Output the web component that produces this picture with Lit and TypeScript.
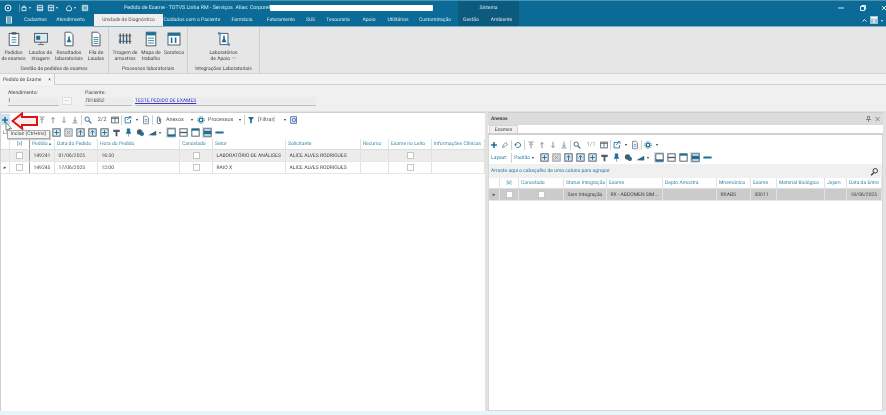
import { LitElement, html, css, svg } from "lit";
import { customElement } from "lit/decorators.js";
import { styleMap } from "lit/directives/style-map.js";

const B = "#1c6f96", D = "#4a5a66", G = "#737e86";
const ic: Record<string, any> = {
  plus: svg`<path d="M6 2.500v7M2.500 6h7" stroke="${B}" stroke-width="1.800"/>`,
  pen: svg`<path d="M3 9l1-3 3-3 2 2-3 3z" fill="none" stroke="${G}"/>`,
  sync: svg`<path d="M3 6a3 3 0 1 1 1 2.300" fill="none" stroke="${B}" stroke-width="1.200"/><path d="M1.500 5h3L3 7.500z" fill="${B}"/>`,
  top: svg`<path d="M3 2.500h6M6 10V4M4 6l2-2 2 2" fill="none" stroke="${G}"/>`,
  up: svg`<path d="M6 10V3M4 5l2-2 2 2" fill="none" stroke="${G}"/>`,
  down: svg`<path d="M6 2v7M4 7l2 2 2-2" fill="none" stroke="${G}"/>`,
  bottom: svg`<path d="M3 9.500h6M6 2v6M4 6l2 2 2-2" fill="none" stroke="${G}"/>`,
  search: svg`<circle cx="5" cy="5" r="2.600" fill="none" stroke="${B}" stroke-width="1.100"/><path d="M7 7l3 3" stroke="${D}" stroke-width="1.400"/>`,
  cols: svg`<rect x="2" y="2.500" width="8" height="7" fill="#fff" stroke="${D}"/><path d="M2 4h8M6 3v6" stroke="${D}"/>`,
  export: svg`<path d="M7 3H2.500v6.500H9V6" fill="none" stroke="${B}"/><path d="M5 6l4-4M7 2h2.500v2.500" fill="none" stroke="${B}"/>`,
  doc: svg`<path d="M3 1.500h4l2 2v7H3z" fill="#f4f7f9" stroke="${G}"/><path d="M4.500 5.500h3M4.500 7.500h3" stroke="${B}" stroke-width=".7"/>`,
  clip: svg`<path d="M8 4v4.500a2 2 0 0 1-4 0V3.500a1.300 1.300 0 0 1 2.600 0V8" fill="none" stroke="${D}"/>`,
  gear: svg`<circle cx="6" cy="6" r="2.200" fill="none" stroke="${B}" stroke-width="1.600"/><circle cx="6" cy="6" r="4" fill="none" stroke="${B}" stroke-width="1" stroke-dasharray="1.200 1"/>`,
  filter: svg`<path d="M2.500 2.500h7L7 6v4H5V6z" fill="${B}"/>`,
  report: svg`<rect x="2" y="2" width="7" height="8" fill="#dbe9f5" stroke="#4b6fb3"/><circle cx="6" cy="6" r="2" fill="none" stroke="#4b6fb3"/>`,
  box: svg`<rect x="2" y="2" width="8" height="8" fill="#dfeaf0" stroke="${D}"/><path d="M6 3.500v5M3.500 6h5" stroke="${B}"/>`,
  boxg: svg`<rect x="2" y="2" width="8" height="8" fill="#ddd" stroke="#8a949b"/><path d="M4 4l4 4M8 4l-4 4" stroke="#8a949b"/>`,
  boxu: svg`<rect x="2" y="2" width="8" height="8" fill="#dfeaf0" stroke="${D}"/><path d="M6 9V4M4 6l2-2 2 2" fill="none" stroke="${B}"/>`,
  pin: svg`<path d="M2.500 3h7v2.500H7V10H5V5.500H2.500z" fill="${D}"/>`,
  bott: svg`<path d="M4.500 2h3v3l1 2H3.500l1-2zM6 7v3.500" fill="${B}" stroke="${B}" stroke-width=".6"/>`,
  color: svg`<circle cx="5" cy="5.500" r="3" fill="${D}"/><circle cx="7.500" cy="7.500" r="2.300" fill="${B}"/>`,
  bars: svg`<path d="M1.500 9L10 4v5z" fill="${D}"/><path d="M5 9V7h5v2z" fill="${B}"/>`,
  l1: svg`<rect x="2" y="2" width="8" height="8" fill="#fff" stroke="${D}"/><path d="M2 9h8" stroke="${B}" stroke-width="2"/>`,
  l2: svg`<rect x="2" y="2" width="8" height="8" fill="#fff" stroke="${D}"/><path d="M2 6h8" stroke="${D}" stroke-width="1.500"/>`,
  l3: svg`<rect x="2" y="2" width="8" height="8" fill="#fff" stroke="${D}"/><path d="M2 3h8" stroke="${B}" stroke-width="2"/>`,
  l4: svg`<rect x="2" y="2" width="8" height="8" fill="#fff" stroke="${D}"/><path d="M2 6h8" stroke="${B}" stroke-width="4"/>`,
  dash: svg`<path d="M1.500 6h9" stroke="${B}" stroke-width="2.200"/>`,
};
const icon = (n: string, on = false) =>
  html`<span class="ti ${on ? "on" : ""}"><svg viewBox="0 0 12 12">${ic[n]}</svg></span>`;
const caret = html`<span class="caret"></span>`;
const sep = html`<span class="sep"></span>`;

const rib: Record<string, any> = {
  clip: svg`<rect x="4" y="3" width="12" height="15" fill="#fff" stroke="${D}" stroke-width="1.200"/><rect x="7" y="1.500" width="6" height="3" fill="${D}"/><path d="M7 8h6M7 11h6M7 14h6" stroke="${B}"/>`,
  screen: svg`<rect x="2" y="3" width="16" height="11" fill="#dfeaf0" stroke="${D}" stroke-width="1.200"/><path d="M6 17h8M10 14v3" stroke="${D}"/><rect x="4" y="6" width="5" height="5" fill="${B}"/>`,
  flask: svg`<path d="M5 1.500h7l3 3v14H5z" fill="#fff" stroke="${D}" stroke-width="1.200"/><path d="M9 7h2v3l2 4H7l2-4z" fill="${B}"/>`,
  file: svg`<path d="M5 1.500h7l3 3v14H5z" fill="#fff" stroke="${D}" stroke-width="1.200"/><path d="M7 8h6M7 10.500h6M7 13h6M7 15.500h6" stroke="${B}"/>`,
  tubes: svg`<path d="M2 6h16M2 13h16" stroke="${D}"/><path d="M4 3v13M8 3v13M12 3v13M16 3v13" stroke="${D}" stroke-width="1.600"/><path d="M4 10v5M12 10v5" stroke="${B}" stroke-width="1.600"/>`,
  map: svg`<rect x="4" y="1.500" width="12" height="17" fill="#fff" stroke="${D}" stroke-width="1.200"/><rect x="4" y="1.500" width="12" height="4" fill="${B}"/><path d="M6 9h8M6 12h8M6 15h8" stroke="${B}"/>`,
  soro: svg`<rect x="2.500" y="2.500" width="15" height="15" fill="#fff" stroke="${D}" stroke-width="1.200"/><rect x="2.500" y="2.500" width="15" height="3.500" fill="${B}"/><path d="M7 8v7M12 8v7" stroke="${B}" stroke-width="2"/>`,
  lab: svg`<path d="M5 3h10v14H5z" fill="#fff" stroke="${D}" stroke-width="1.200"/><path d="M9 6h2v3l2 5H7l2-5z" fill="${B}"/><circle cx="4" cy="3" r="1.700" fill="#2f9ad0"/><circle cx="16" cy="17" r="1.700" fill="#2f9ad0"/>`,
};

const tabs: [string, number][] = [
  ["Cadastros", 23], ["Atendimento", 47], ["Unidade de Diagnóstico", 69],
  ["Cuidados com o Paciente", 58], ["Farmácia", 42], ["Faturamento", 36],
  ["SUS", 23], ["Tesouraria", 32], ["Apoio", 30], ["Utilitários", 28],
  ["Customização", 46], ["Gestão", 26], ["Ambiente", 35],
];

const qa: [string, number, boolean][] = [
  ["M3 10V5h6v5zM4 5a2 2 0 1 1 4 0", 16, true],
  ["M2 2h8v8H2zM2 5h8M2 8h8", 11, false],
  ["M2 2h8v8H2zM2 5h8M6 5v5", 18, true],
  ["M6 2l4 4-1 4H3L2 6z", 16, true],
  ["M2 2h8v8H2zM4 4h4v4H4z", 11, false],
];

const groups = [
  { w: 109, label: "Gestão de pedidos de exames", items: [["clip", ["Pedidos", "de exames"], 27], ["screen", ["Laudos de", "imagem"], 27], ["flask", ["Resultados", "laboratoriais"], 30], ["file", ["Fila de", "Laudos"], 24]] },
  { w: 79, label: "Processos laboratoriais", items: [["tubes", ["Triagem de", "amostras"], 28], ["map", ["Mapa de", "trabalho"], 24], ["soro", ["Soroteca", ""], 22]] },
  { w: 72, label: "Integrações Laboratoriais", items: [["lab", ["Laboratórios", "de Apoio ﹀"], 72]] },
];

const leftCols = [
  ["", 9], ["[x]", 20], ["Pedido ▴", 25], ["Data do Pedido", 43], ["Hora do Pedido", 82], ["Cancelado", 33],
  ["Setor", 73], ["Solicitante", 75], ["Recurso", 28], ["Exame no Leito", 43], ["Informações Clínicas", 53],
] as [string, number][];
const leftRows = [
  ["", "□", "149241", "01/06/2025", "16:50", "□", "LABORATÓRIO DE ANÁLISES", "ALICE ALVES RODRIGUES", "", "□", ""],
  ["▸", "□", "149245", "17/06/2025", "12:00", "□", "RAIO X", "ALICE ALVES RODRIGUES", "", "□", ""],
];
const rightCols = [
  ["", 11], ["[x]", 19], ["Cancelado", 45], ["Status Integração", 43], ["Exame", 56], ["Depto Amostra", 54],
  ["Mnemônico", 34], ["Exame", 26], ["Material Biológico", 48], ["Jejum", 22], ["Data da Entre", 35],
] as [string, number][];
const rightRow = ["▸", "□", "□", "Sem Integração", "RX - ABDOMEN SIM...", "", "RXABS", "30011", "", "", "18/06/2025"];

@customElement("app-root")
export class AppRoot extends LitElement {
  static styles = css`
    :host { display: block; width: 886px; height: 415px; overflow: hidden; position: relative; font-family: Roboto, "Noto Sans", sans-serif; font-size: 5px; text-rendering: geometricPrecision; color: #444; background: #f0f0f0; filter: blur(0.25px); }
    .title { height: 14px; background: #0b6b96; border-top: 1px solid #4b93b3; box-sizing: border-box; display: flex; align-items: center; color: #d8e8ef; position: relative; }
    .qa { display: flex; align-items: center; padding-left: 4px; width: 124px; box-sizing: border-box; flex: none; }
    .qa svg { display: block; flex: none; }
    .qa .first { margin-right: 7px; }
    .qa .bar { width: 1px; height: 8px; background: #5a9ab5; flex: none; }
    .qi { display: flex; align-items: center; gap: 1px; }
    .wc { border: 1.500px solid transparent; border-top: 2px solid #e8f2f6; margin-top: 2px; }
    .wintitle { width: 146px; white-space: nowrap; flex: none; font-size: 5.300px; }
    .redact { width: 163px; height: 6px; background: #fff; border-radius: 1px; flex: none; }
    .sistema { margin-left: 25px; width: 61px; height: 100%; background: #0c5a7d; display: flex; align-items: center; justify-content: center; flex: none; }
    .wctl { margin-left: auto; display: flex; gap: 16px; align-items: center; }
    .tabs { height: 12px; background: #0b6b96; border-bottom: 1px solid #7fb2c9; display: flex; color: #d8e8ef; position: relative; align-items: stretch; }
    .tabs .mn { width: 24px; display: flex; align-items: center; padding-left: 6px; box-sizing: border-box; }
    .tab { display: flex; align-items: center; justify-content: center; white-space: nowrap; }
    .tab.act { background: #eeeeee; color: #555; }
    .tab.dark { background: #0c5a7d; }
    .tright { margin-left: auto; display: flex; align-items: center; gap: 3px; padding-right: 3px; }
    .ribbon { height: 46px; background: #e6e6e6; display: flex; border-bottom: 1px solid #d4d4d4; }
    .grp { display: flex; flex-direction: column; align-items: stretch; border-right: 1px solid #cfcfcf; box-sizing: border-box; }
    .its { flex: 1; display: flex; justify-content: center; padding-top: 4px; }
    .it { display: flex; flex-direction: column; align-items: center; line-height: 6px; white-space: nowrap; }
    .it svg { margin-bottom: 2.500px; }
    .glabel { text-align: center; height: 9px; line-height: 11px; white-space: nowrap; }
    .dochead { height: 10px; background: #f2f2f2; border-bottom: 1px solid #cfcfcf; display: flex; }
    .doctab { width: 55px; box-sizing: border-box; border-right: 1px solid #ccc; background: #f4f4f4; padding: 0 3px; display: flex; align-items: center; justify-content: space-between; height: 11px; }
    .form { height: 26px; background: #f0f0f0; display: flex; padding: 5px 0 0 8px; box-sizing: border-box; }
    .fld { display: flex; flex-direction: column; line-height: 7px; }
    .f1 { width: 51px; }
    .f2 { width: 47px; }
    .inp { height: 8px; line-height: 8px; border-bottom: 1px solid #bdbdbd; background: #ececec; }
    .dots { width: 10px; height: 8px; background: #f8f8f8; border: 1px solid #ddd; box-sizing: border-box; margin: 7px 13px 0 3px; text-align: center; line-height: 5px; }
    .link { color: #3838d0; text-decoration: underline; width: 181px; margin-left: 3px; }
    .main { display: flex; height: 300px; background: #e2e2e2; padding: 1px 3px 0 0; gap: 3px; box-sizing: border-box; }
    .panel { background: #fff; border-top: 1px solid #cfcfcf; box-sizing: border-box; display: flex; flex-direction: column; }
    .left { width: 486px; border-left: 1px solid #cfcfcf; }
    .right { flex: 1; }
    .tb { display: flex; align-items: center; height: 13px; gap: 1px; color: #555; flex: none; white-space: nowrap; }
    .left .tb:first-child { margin-left: -1px; }
    .tb2 { gap: 2px; }
    .tb2 .ti svg { width: 11px; height: 11px; }
    .tb2 .caret { margin: 2px 3px 0 0; }
    .lead { width: 48px; display: flex; align-items: center; flex: none; gap: 1px; padding-left: 2px; box-sizing: border-box; color: #2b7da3; }
    .lead .sep { margin: 0 1px 0 3px; }
    .lead .caret { margin: 2px 0 0 1px; }
    .ti { display: inline-flex; width: 10px; height: 11px; align-items: center; justify-content: center; flex: none; }
    .ti.on { background: #cfe0f0; }
    .ti svg { display: block; width: 10px; height: 10px; flex: none; }
    .sep { width: 1px; height: 10px; background: #d0d0d0; flex: none; }
    .caret { display: inline-block; width: 0; height: 0; border: 1.500px solid transparent; border-top: 2px solid #333; margin: 2px 2px 0 2px; flex: none; }
    .lbl { padding-left: 1px; box-sizing: border-box; flex: none; font-size: 5.400px; }
    .cnt { width: 15px; text-align: center; font-size: 5.800px; }
    .cnt.off { color: #999; }
    .anx { width: 23px; }
    .prc { width: 29px; }
    .flt { width: 24px; }
    .row { display: grid; flex: none; }
    .cell { white-space: nowrap; overflow: hidden; display: flex; align-items: center; padding-left: 2px; border-right: 1px solid #e2e2e2; box-sizing: border-box; }
    .cell.ck { justify-content: center; padding: 0; }
    .head { height: 11px; color: #3d87aa; border-bottom: 1px solid #ddd; box-sizing: border-box; }
    .r { height: 12px; border-bottom: 1px solid #e6e6e6; box-sizing: border-box; }
    .r .cell { padding-left: 3.500px; }
    .r .cell.ck { padding: 0; }
    .left .cell:nth-child(2) { border-right: 1px solid #9a9a9a; }
    .r.g { background: #ececec; }
    .r.d { background: #cbcbcb; }
    .cb { width: 7px; height: 7px; background: #fff; border: 1px solid #c6c6c6; box-sizing: border-box; }
    .pnh { height: 12px; background: #dcdcdc; display: flex; align-items: center; padding: 0 3px; font-weight: 700; color: #444; flex: none; justify-content: space-between; box-sizing: border-box; }
    .ctl { display: flex; gap: 4px; }
    .ctl svg { display: block; }
    .rtabs { height: 10px; display: flex; padding-left: 1px; border-bottom: 2px solid #cfcfcf; flex: none; box-sizing: border-box; }
    .rtab { width: 29px; background: #f0f0f0; border: 1px solid #d4d4d4; border-bottom: 0; text-align: center; line-height: 8px; box-sizing: border-box; }
    .rbody { flex: 1; border: 1px solid #d8d8d8; border-top: 0; display: flex; flex-direction: column; padding-top: 3px; }
    .groupbar { height: 14px; background: #f0f0f0; color: #2b7da3; display: flex; align-items: center; justify-content: space-between; padding: 0 3px 0 2px; flex: none; box-sizing: border-box; }
    .strip { height: 4px; background: #e8f5f8; }
    .tip { position: absolute; left: 7px; top: 130px; width: 43px; height: 9px; background: #f4f4f4; border: 1px solid #aaa; box-sizing: border-box; line-height: 7px; text-align: center; white-space: nowrap; box-shadow: 1px 1px 1px #ccc; }
    .arrow { position: absolute; left: 11px; top: 112px; }
    .cur { position: absolute; left: 5px; top: 122px; }
  `;

  private grid(cols: [string, number][], cells: any[], cls: string) {
    const tpl = cols.map((c) => c[1] + "px").join(" ");
    return html`<div class="row ${cls}" style=${styleMap({ gridTemplateColumns: tpl })}>
      ${cells.map((c, i) =>
        c === "□"
          ? html`<div class="cell ck"><span class="cb"></span></div>`
          : html`<div class="cell ${i < 2 ? "ck" : ""}">${c}</div>`
      )}
    </div>`;
  }

  private bar2() {
    return html`<div class="tb tb2">
      <div class="lead"><span>Layout:</span>${sep}<span>Padrão</span>${caret}</div>
      ${icon("box")}${icon("boxg")}${icon("boxu")}${icon("boxu")}${icon("box")}${icon("pin")}${icon("bott")}${icon("color")}
      ${icon("bars")}${caret}
      ${icon("l1", true)}${icon("l2")}${icon("l3")}${icon("l4", true)}${icon("dash")}
    </div>`;
  }

  render() {
    return html`
      <div class="title">
        <div class="qa">
          <svg class="first" width="8" height="8" viewBox="0 0 12 12"><circle cx="6" cy="6" r="4.500" fill="none" stroke="#e8f2f6" stroke-width="1.500"/><circle cx="6" cy="6" r="1.500" fill="#e8f2f6"/></svg>
          <span class="bar"></span>
          ${qa.map(
            ([d, w, c]) => html`<span class="qi" style=${styleMap({ width: w + "px" })}><svg width="8" height="8" viewBox="0 0 12 12"><path d=${d} fill="none" stroke="#e8f2f6" stroke-width="1.300"/></svg>${c ? html`<span class="wc"></span>` : ""}</span>`
          )}
        </div>
        <div class="wintitle">Pedido de Exame - TOTVS Linha RM - Serviços&nbsp; Alias: CorporeRM</div>
        <div class="redact"></div>
        <div class="sistema">Sistema</div>
        <div class="wctl">
          <svg width="6" height="6" viewBox="0 0 6 6"><path d="M0 3h6" stroke="#cfe2ea"/></svg>
          <svg width="6" height="6" viewBox="0 0 6 6"><path d="M.5 1.500h4v4h-4zM1.500 .5h4v4" fill="none" stroke="#e8f2f6"/></svg>
          <svg width="4" height="6" viewBox="0 0 4 6"><path d="M0 1l4 4M4 1L0 5" stroke="#e8f2f6"/></svg>
        </div>
      </div>
      <div class="tabs">
        <div class="mn"><svg width="6" height="8" viewBox="0 0 6 8"><path d="M0 .5h6v7H0z" fill="#dbe9ef"/><path d="M1 2h4M1 4h4M1 6h4" stroke="#0b6b96"/></svg></div>
        ${tabs.map(([t, w]) => html`<div class="tab ${t.startsWith("Unidade") ? "act" : ""} ${t === "Gestão" || t === "Ambiente" ? "dark" : ""}" style=${styleMap({ width: w + "px" })}>${t}</div>`)}
        <div class="tright">
          <svg width="5" height="3" viewBox="0 0 5 3"><path d="M.5 2.500L2.500 .5l2 2" fill="none" stroke="#e0eef3"/></svg>
          <svg width="8" height="8" viewBox="0 0 8 8"><rect width="8" height="8" fill="#9cc4d6"/><path d="M1 1h6v1.500H1z" fill="#fff"/><path d="M4 3v4" stroke="#fff"/></svg>
          <span class="wc"></span>
        </div>
      </div>
      <div class="ribbon">
        ${groups.map(
          (g) => html`<div class="grp" style=${styleMap({ width: g.w + "px" })}>
            <div class="its">
              ${g.items.map(
                ([ic2, l, w]: any) => html`<div class="it" style=${styleMap({ width: w + "px" })}>
                  <svg viewBox="0 0 20 20" width="16" height="16">${rib[ic2]}</svg><span>${l[0]}</span><span>${l[1]}</span>
                </div>`
              )}
            </div>
            <div class="glabel">${g.label}</div>
          </div>`
        )}
      </div>
      <div class="dochead"><div class="doctab"><span>Pedido de Exame</span><span>×</span></div></div>
      <div class="form">
        <div class="fld f1"><span>Atendimento:</span><span class="inp">1</span></div>
        <div class="dots">...</div>
        <div class="fld f2"><span>Paciente:</span><span class="inp">7016852</span></div>
        <div class="fld"><span>&nbsp;</span><span class="inp link">TESTE PEDIDO DE EXAMES</span></div>
      </div>
      <div class="main">
        <div class="panel left">
          <div class="tb">
            ${icon("plus", true)}${icon("pen")}${sep}${icon("sync")}${sep}${icon("top")}${icon("up")}${icon("down")}${icon("bottom")}${sep}
            ${icon("search")}<span class="lbl cnt">2/2</span>${icon("cols")}${sep}${icon("export")}${caret}${icon("doc")}${sep}
            ${icon("clip")}<span class="lbl anx">Anexos</span>${caret}${icon("gear")}<span class="lbl prc">Processos</span>${caret}${sep}
            ${icon("filter")}<span class="lbl flt">[Filtrar]</span>${caret}${icon("report")}
          </div>
          ${this.bar2()}
          ${this.grid(leftCols, leftCols.map((c) => c[0]), "head")}
          ${leftRows.map((r, i) => this.grid(leftCols, r, i === 0 ? "r g" : "r"))}
        </div>
        <div class="panel right">
          <div class="pnh"><span>Anexos</span><span class="ctl">
            <svg width="5" height="6" viewBox="0 0 5 6"><path d="M1 .5h3M1.500 .5v3h2v-3M0 3.500h5M2.500 3.500V6" fill="none" stroke="#777" stroke-width=".8"/></svg>
            <svg width="5" height="6" viewBox="0 0 5 6"><path d="M.5 1l4 4M4.500 1l-4 4" stroke="#777" stroke-width=".8"/></svg>
          </span></div>
          <div class="rtabs"><div class="rtab">Exames</div></div>
          <div class="rbody">
            <div class="tb">
              ${icon("plus")}${icon("pen")}${sep}${icon("sync")}${sep}${icon("top")}${icon("up")}${icon("down")}${icon("bottom")}${sep}
              ${icon("search")}<span class="lbl cnt off">1/1</span>${icon("cols")}${sep}${icon("export")}${caret}${icon("doc")}${sep}${icon("gear")}${caret}
            </div>
            ${this.bar2()}
            <div class="groupbar"><span>Arraste aqui o cabeçalho de uma coluna para agrupar</span><svg width="9" height="9" viewBox="0 0 12 12"><circle cx="7" cy="5" r="3" fill="none" stroke="#333" stroke-width="1.300"/><path d="M5 7.500L1.500 11" stroke="#333" stroke-width="1.800"/></svg></div>
            ${this.grid(rightCols, rightCols.map((c) => c[0]), "head")}
            ${this.grid(rightCols, rightRow, "r d")}
          </div>
        </div>
      </div>
      <div class="strip"></div>
      <svg class="arrow" width="28" height="18" viewBox="0 0 28 18"><path d="M1.500 9L11 1.500V5h15v8H11v3.500z" fill="#fbeeee" stroke="#dd1414" stroke-width="2"/></svg>
      <svg class="cur" width="7" height="10" viewBox="0 0 7 10"><path d="M1 .5v8l2-1.500 1.500 2.500 1-.6L4 6.500h2.500z" fill="#fff" stroke="#555" stroke-width=".7"/></svg>
      <div class="tip">Incluir (Ctrl+Ins)</div>
    `;
  }
}
